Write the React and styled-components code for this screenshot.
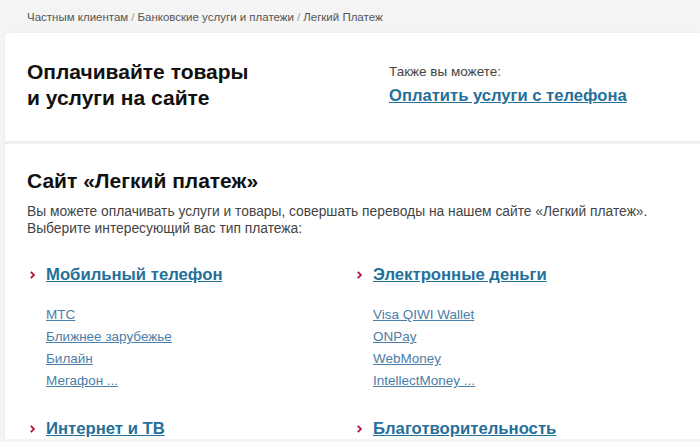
import styled, { createGlobalStyle } from "styled-components";

const Global = createGlobalStyle`
  html, body {
    margin: 0;
    padding: 0;
    background: #f4f4f4;
    font-family: "Liberation Sans", Arial, sans-serif;
  }
`;

const Crumbs = styled.nav`
  padding: 11px 27px 0;
  height: 22px;
  font-size: 11.5px;
  color: #555;
  span { color: #999; margin: 0 3px; }
`;

const Panel = styled.div`
  margin-left: 5px;
  background: #fff;
  border-top-left-radius: 4px;
  box-shadow: 0 0 3px rgba(0, 0, 0, 0.06);
`;

const Top = styled.section`
  display: flex;
  height: 111px;
  box-sizing: border-box;
  padding: 26px 22px 0;
  border-bottom: 3px solid #efefef;
`;

const Title = styled.h1`
  margin: 0;
  width: 362px;
  font-size: 21px;
  line-height: 26px;
  font-weight: bold;
  color: #111;
`;

const Aside = styled.div`
  padding-top: 5px;
`;

const Note = styled.div`
  font-size: 13.5px;
  line-height: 16px;
  color: #444;
`;

const BigLink = styled.a`
  display: inline-block;
  margin-top: 6px;
  font-size: 16.6px;
  line-height: 20px;
  font-weight: bold;
  color: #24709a;
  text-decoration: underline;
`;

const Body = styled.section`
  padding: 24px 22px 0;
`;

const Heading = styled.h2`
  margin: 0;
  font-size: 21px;
  line-height: 26px;
  font-weight: bold;
  color: #111;
`;

const Lead = styled.p`
  margin: 9px 0 0;
  font-size: 13.8px;
  line-height: 17px;
  color: #444;
`;

const Grid = styled.div`
  display: grid;
  grid-template-columns: 327px 327px;
  row-gap: 27px;
  margin-top: 28px;
  padding-left: 3px;
`;

const Group = styled.div``;

const GroupTitle = styled.div`
  display: flex;
  align-items: center;
  gap: 11px;
  a {
    font-size: 16.7px;
    line-height: 20px;
    font-weight: bold;
    color: #24709a;
    text-decoration: underline;
  }
`;

const Items = styled.ul`
  list-style: none;
  margin: 19px 0 0;
  padding: 0 0 0 16px;
`;

const Item = styled.li`
  font-size: 13.5px;
  line-height: 22px;
  a {
    color: #4a7ea6;
    text-decoration: underline;
  }
`;

const Chevron = () => (
  <svg width="5" height="8" viewBox="0 0 5 8">
    <polyline points="0.8,0.8 4,4 0.8,7.2" fill="none" stroke="#b3173c" strokeWidth="1.8" />
  </svg>
);

const groups = [
  { title: "Мобильный телефон", items: ["МТС", "Ближнее зарубежье", "Билайн", "Мегафон ..."] },
  { title: "Электронные деньги", items: ["Visa QIWI Wallet", "ONPay", "WebMoney", "IntellectMoney ..."] },
  { title: "Интернет и ТВ", items: [] },
  { title: "Благотворительность", items: [] },
];

export default function App() {
  return (
    <>
      <Global />
      <Crumbs>
        Частным клиентам<span>/</span>Банковские услуги и платежи<span>/</span>Легкий Платеж
      </Crumbs>
      <Panel>
        <Top>
          <Title>
            Оплачивайте товары
            <br />и услуги на сайте
          </Title>
          <Aside>
            <Note>Также вы можете:</Note>
            <BigLink href="#">Оплатить услуги с телефона</BigLink>
          </Aside>
        </Top>
        <Body>
          <Heading>Сайт «Легкий платеж»</Heading>
          <Lead>
            Вы можете оплачивать услуги и товары, совершать переводы на нашем сайте «Легкий платеж».
            <br />
            Выберите интересующий вас тип платежа:
          </Lead>
          <Grid>
            {groups.map((g) => (
              <Group key={g.title}>
                <GroupTitle>
                  <Chevron />
                  <a href="#">{g.title}</a>
                </GroupTitle>
                {g.items.length > 0 && (
                  <Items>
                    {g.items.map((i) => (
                      <Item key={i}>
                        <a href="#">{i}</a>
                      </Item>
                    ))}
                  </Items>
                )}
              </Group>
            ))}
          </Grid>
        </Body>
      </Panel>
    </>
  );
}
